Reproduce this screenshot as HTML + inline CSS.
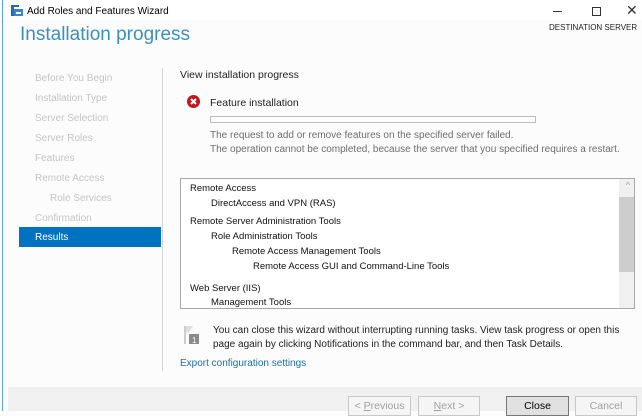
<!DOCTYPE html>
<html><head><meta charset="utf-8"><style>
*{margin:0;padding:0;box-sizing:border-box}
body{width:642px;height:411px;overflow:hidden;background:#fcfcfc;font-family:"Liberation Sans",sans-serif;font-size:10.5px;color:#1e1e1e;position:relative}
.a{position:absolute;white-space:nowrap}
.nav{color:#c4c4c4;font-size:10px}
.li{font-size:9.5px;color:#111}
.btn{position:absolute;top:396px;height:20px;border:1px solid #c8c8c8;background:#f5f5f5;color:#a0a0a0;text-align:center;font-size:10.5px;line-height:18px}
</style></head><body>
<div class="a" style="left:0;top:0;width:642px;height:20px;background:#fff"></div>
<div class="a" style="left:2px;top:0;width:1px;height:411px;background:#5aa3e6"></div>
<svg class="a" style="left:10px;top:4px" width="14" height="13"><rect x="1" y="1" width="3" height="11" fill="#1c6fb8"/><rect x="4" y="5" width="9" height="7" fill="#3a86cc"/><rect x="6" y="8" width="5" height="2" fill="#fff"/><rect x="1" y="1" width="8" height="2" fill="#1c6fb8"/></svg>
<div class="a" style="left:27px;top:6px;font-size:10px;color:#000">Add Roles and Features Wizard</div>
<div class="a" style="left:553px;top:11px;width:9px;height:1px;background:#333"></div>
<div class="a" style="left:592px;top:7px;width:9px;height:9px;border:1px solid #333"></div>
<div class="a" style="left:626px;top:2px;font-size:14px;color:#333">✕</div>
<div class="a" style="left:549px;top:23px;font-size:8px;color:#222">DESTINATION SERVER</div>
<div class="a" style="left:20px;top:24px;font-size:19px;color:#3d8fbb">Installation progress</div>
<div class="a nav" style="left:35px;top:73px">Before You Begin</div>
<div class="a nav" style="left:35px;top:93px">Installation Type</div>
<div class="a nav" style="left:35px;top:113px">Server Selection</div>
<div class="a nav" style="left:35px;top:133px">Server Roles</div>
<div class="a nav" style="left:35px;top:153px">Features</div>
<div class="a nav" style="left:35px;top:173px">Remote Access</div>
<div class="a nav" style="left:50px;top:193px">Role Services</div>
<div class="a nav" style="left:35px;top:213px">Confirmation</div>
<div class="a" style="left:19px;top:227px;width:142px;height:20px;background:#0072c0;color:#fff;padding:5px 0 0 16px;font-size:10px">Results</div>
<div class="a" style="left:162px;top:68px;width:1px;height:303px;background:#d4d4d4"></div>
<div class="a" style="left:180px;top:69px">View installation progress</div>
<svg class="a" style="left:187px;top:95px" width="13" height="13"><circle cx="6.5" cy="6.5" r="6.5" fill="#c4161c"/><path d="M4 4L9 9M9 4L4 9" stroke="#fff" stroke-width="2"/></svg>
<div class="a" style="left:210px;top:97px">Feature installation</div>
<div class="a" style="left:210px;top:116px;width:326px;height:7px;border:1px solid #bcbcbc;background:#fff"></div>
<div class="a" style="left:210px;top:129px;color:#6d6d6d;font-size:10px;line-height:14px">The request to add or remove features on the specified server failed.<br>The operation cannot be completed, because the server that you specified requires a restart.</div>
<div class="a" style="left:180px;top:178px;width:455px;height:131px;border:1px solid #a8a8a8;background:#fff;overflow:hidden">
<div class="a" style="right:0;top:0;width:15px;height:131px;background:#f0f0f0"></div>
<div class="a" style="right:0;top:18px;width:15px;height:75px;background:#cdcdcd"></div>
<div class="a" style="right:4px;top:1px;color:#a0a0a0;font-size:9px">^</div>
<div class="a li" style="left:9px;top:4px">Remote Access</div>
<div class="a li" style="left:30px;top:19px">DirectAccess and VPN (RAS)</div>
<div class="a li" style="left:9px;top:37px">Remote Server Administration Tools</div>
<div class="a li" style="left:30px;top:52px">Role Administration Tools</div>
<div class="a li" style="left:51px;top:67px">Remote Access Management Tools</div>
<div class="a li" style="left:72px;top:82px">Remote Access GUI and Command-Line Tools</div>
<div class="a li" style="left:9px;top:104px">Web Server (IIS)</div>
<div class="a li" style="left:30px;top:118px">Management Tools</div>
</div>
<svg class="a" style="left:183px;top:325px" width="20" height="20"><path d="M1 1L10 1L6 7L1 8Z" fill="#ddd"/><rect x="1" y="1" width="2" height="18" fill="#ccc"/><rect x="6" y="9" width="10" height="10" fill="#8a8a8a"/><text x="9" y="18" font-size="8" fill="#fff" font-family="Liberation Sans">1</text></svg>
<div class="a" style="left:213px;top:324px;font-size:10px;line-height:14px">You can close this wizard without interrupting running tasks. View task progress or open this<br>page again by clicking Notifications in the command bar, and then Task Details.</div>
<div class="a" style="left:180px;top:358px;color:#1a6fa8;font-size:10px">Export configuration settings</div>
<div class="a" style="left:8px;top:387px;width:634px;height:24px;background:#f0f0f0"></div>
<div class="btn" style="left:348px;width:63px">&lt; <u>P</u>revious</div>
<div class="btn" style="left:418px;width:62px"><u>N</u>ext &gt;</div>
<div class="btn" style="left:506px;width:63px;border-color:#777;background:#e1e1e1;color:#000">Close</div>
<div class="btn" style="left:575px;width:62px">Cancel</div>
</body></html>
